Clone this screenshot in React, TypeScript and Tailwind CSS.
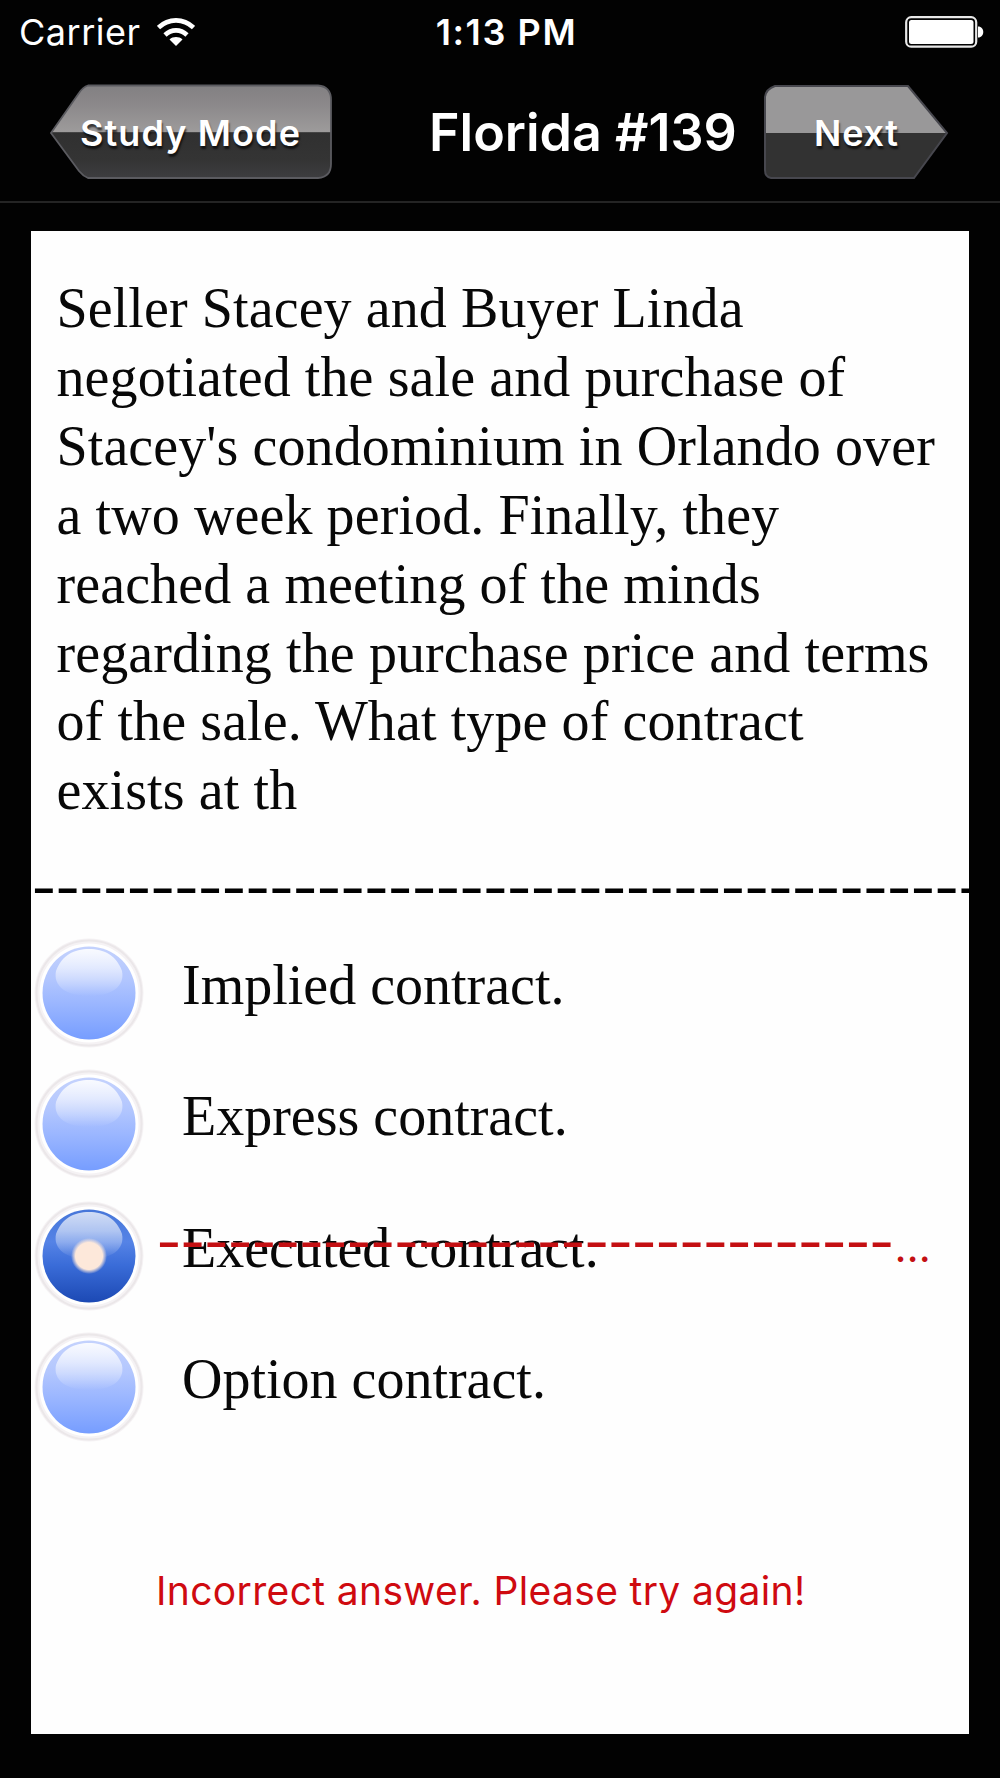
const questionLines = [
    "Seller Stacey and Buyer Linda",
    "negotiated the sale and purchase of",
    "Stacey's condominium in Orlando over",
    "a two week period. Finally, they",
    "reached a meeting of the minds",
    "regarding the purchase price and terms",
    "of the sale. What type of contract",
    "exists at th",
]

const answers = [
    { id: 1, text: "Implied contract.", selected: false },
    { id: 2, text: "Express contract.", selected: false },
    { id: 3, text: "Executed contract.", selected: true },
    { id: 4, text: "Option contract.", selected: false },
]

export default function App() {
    return (
        <div className="flex h-[1778px] w-[1000px] flex-col overflow-hidden bg-[#020202] font-['Inter',sans-serif] text-white">
            <StatusBar />
            <NavBar />
            <main className="mx-[31px] mt-[28px] flex h-[1503px] flex-col overflow-hidden bg-[#fefefe] text-black">
                <div className="h-[620px] pt-[43px] pl-[25.5px] font-['Liberation_Serif',serif] text-[56px] leading-[68.9px] tracking-[0.1px] whitespace-nowrap text-[#080808]">
                    {questionLines.map((line) => (
                        <p key={line}>{line}</p>
                    ))}
                </div>
                <div className="h-[76px] overflow-hidden text-[56px] leading-[74px] tracking-[-2px] whitespace-nowrap">
                    {"-".repeat(40)}
                </div>
                <ul>
                    {answers.map(({ id, text, selected }) => (
                        <li key={id} className="relative flex h-[131.5px] items-center">
                            <RadioBall selected={selected} />
                            <span className="ml-[38px] pb-[16px] font-['Liberation_Serif',serif] text-[56px] leading-[64px] whitespace-nowrap text-[#080808]">{text}</span>
                            {selected && <WrongMark />}
                        </li>
                    ))}
                </ul>
                <p className="mt-[108px] ml-[125px] text-[39px] leading-[60px] tracking-[0.35px] whitespace-nowrap text-[#cf0a10]">
                    Incorrect answer. Please try again!
                </p>
            </main>
        </div>
    )
}

function StatusBar() {
    return (
        <div className="grid h-[64px] grid-cols-3 items-center pr-[16px] pl-[19px]">
            <div className="flex items-center gap-[16px]">
                <span className="text-[36px] leading-[64px] tracking-[0.5px]">Carrier</span>
                <svg width="38" height="29" viewBox="0 0 38 29" fill="none" stroke="white" strokeWidth="4.6">
                    <path d="M1.5 9.6C11.5 0 26.5 0 36.5 9.6" />
                    <path d="M8 17C14.5 10.8 23.5 10.8 30 17" />
                    <path d="M12.5 21.5C16 18.3 22 18.3 25.5 21.5L19 28Z" fill="white" stroke="none" />
                </svg>
            </div>
            <span className="pl-[10px] text-center text-[36px] font-semibold tracking-[1.6px]">1:13 PM</span>
            <svg className="justify-self-end" width="79" height="32" viewBox="0 0 79 32">
                <rect x="1.2" y="1.2" width="70" height="29.5" rx="5" fill="none" stroke="#e8e8e8" strokeWidth="2.2" />
                <rect x="4" y="4" width="64.5" height="24" rx="2.5" fill="white" />
                <path d="M73 10.5C80 10.5 80 21.5 73 21.5Z" fill="white" />
            </svg>
        </div>
    )
}

function NavBar() {
    return (
        <nav className="flex h-[139px] items-start border-b-2 border-[#242424] pt-[20px] pl-[49px]">
            <button className="relative h-[96px] w-[284px]">
                <svg className="absolute inset-0" width="284" height="96" viewBox="0 0 284 96">
                    <defs>
                        <linearGradient id="study" x1="0" y1="0" x2="0" y2="1">
                            <stop offset="0" stopColor="#828082" />
                            <stop offset="0.2" stopColor="#8b888a" />
                            <stop offset="0.5" stopColor="#9d9b9b" />
                            <stop offset="0.51" stopColor="#303030" />
                            <stop offset="0.8" stopColor="#343434" />
                            <stop offset="1" stopColor="#3d3d40" />
                        </linearGradient>
                    </defs>
                    <path d="M39 1.5H269Q282 2.5 282 16V80Q282 93 269 94H39Q34 92 30 87L2 49L30 9Q34 3 39 1.5Z" fill="url(#study)" stroke="#5b5b60" strokeWidth="1.8" />
                </svg>
                <span className="relative block pl-[31px] text-left text-[36px] leading-[98px] font-semibold tracking-[1.1px] whitespace-nowrap [text-shadow:1px_3px_2px_rgba(0,0,0,0.65)]">Study Mode</span>
            </button>
            <h1 className="ml-[96px] w-[334px] text-[52px] leading-[98px] font-semibold whitespace-nowrap">Florida #139</h1>
            <button className="relative h-[96px] w-[186px]">
                <svg className="absolute inset-0" width="186" height="96" viewBox="0 0 186 96">
                    <path d="M12 2H145L184 49H2V13Q3 5 12 2Z" fill="#999899" />
                    <path d="M2 49H184L151 94H8Q2 93 2 86Z" fill="#323232" />
                    <path d="M12 2H145L184 49L151 94H8Q2 93 2 86V13Q3 5 12 2Z" fill="none" stroke="#47474e" strokeWidth="2" />
                </svg>
                <span className="relative block pl-[51px] text-left text-[36px] leading-[98px] font-semibold tracking-[0.8px] whitespace-nowrap [text-shadow:1px_3px_2px_rgba(0,0,0,0.65)]">Next</span>
            </button>
        </nav>
    )
}

function RadioBall({ selected }: { selected: boolean }) {
    const name = selected ? "on" : "off"
    return (
        <svg className="ml-[3px] shrink-0" width="110" height="110" viewBox="0 0 110 110">
            <defs>
                <linearGradient id={`ball-${name}`} x1="0" y1="0" x2="0" y2="1">
                    <stop offset="0" stopColor={selected ? "#4676d9" : "#c4d2fd"} />
                    <stop offset="0.35" stopColor={selected ? "#5583e6" : "#b2c6fe"} />
                    <stop offset="0.6" stopColor={selected ? "#3a6cd8" : "#9cb7ff"} />
                    <stop offset="1" stopColor={selected ? "#1c49b4" : "#769dff"} />
                </linearGradient>
                <linearGradient id={`shine-${name}`} x1="0" y1="0" x2="0" y2="1">
                    <stop offset="0" stopColor="white" stopOpacity={selected ? 0.75 : 0.9} />
                    <stop offset="0.4" stopColor="white" stopOpacity={selected ? 0.55 : 0.6} />
                    <stop offset="1" stopColor="white" stopOpacity="0" />
                </linearGradient>
                <radialGradient id="dot">
                    <stop offset="0.75" stopColor="#fde8da" />
                    <stop offset="1" stopColor="#fde8da" stopOpacity="0" />
                </radialGradient>
            </defs>
            <circle cx="55" cy="55" r="52" fill="white" stroke="#f5f2f4" strokeWidth="5" />
            <circle cx="55" cy="55" r="52.5" fill="none" stroke="#ebe7e9" strokeWidth="2" />
            <circle cx="55" cy="55" r="46.5" fill={`url(#ball-${name})`} />
            <path d="M22 33C28 17 40 11 55 11S82 17 88 33C91 48 78 58 55 58S19 48 22 33Z" fill={`url(#shine-${name})`} />
            {selected && <circle cx="55" cy="55" r="18" fill="url(#dot)" />}
        </svg>
    )
}

function WrongMark() {
    return (
        <div className="absolute inset-y-0 left-[125px] flex items-baseline leading-[105px] whitespace-nowrap text-[#c40f12]">
            <span className="text-[56px] tracking-[-2px]">{"-".repeat(31)}</span>
            <span className="ml-[2px] text-[42px]">…</span>
        </div>
    )
}
